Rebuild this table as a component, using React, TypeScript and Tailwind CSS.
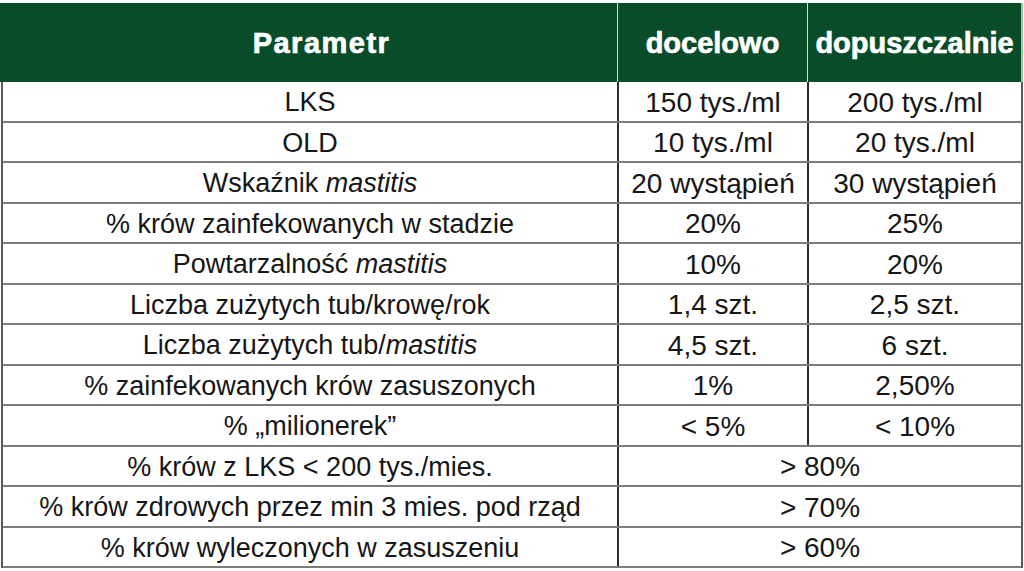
import React from "react";

type Row = { p: React.ReactNode; a: string; b?: string };

const rows: Row[] = [
  { p: "LKS", a: "150 tys./ml", b: "200 tys./ml" },
  { p: "OLD", a: "10 tys./ml", b: "20 tys./ml" },
  { p: <>Wskaźnik <i>mastitis</i></>, a: "20 wystąpień", b: "30 wystąpień" },
  { p: "% krów zainfekowanych w stadzie", a: "20%", b: "25%" },
  { p: <>Powtarzalność <i>mastitis</i></>, a: "10%", b: "20%" },
  { p: "Liczba zużytych tub/krowę/rok", a: "1,4 szt.", b: "2,5 szt." },
  { p: <>Liczba zużytych tub/<i>mastitis</i></>, a: "4,5 szt.", b: "6 szt." },
  { p: "% zainfekowanych krów zasuszonych", a: "1%", b: "2,50%" },
  { p: "% „milionerek”", a: "< 5%", b: "< 10%" },
  { p: "% krów z LKS < 200 tys./mies.", a: "> 80%" },
  { p: "% krów zdrowych przez min 3 mies. pod rząd", a: "> 70%" },
  { p: "% krów wyleczonych w zasuszeniu", a: "> 60%" },
];

export default function App() {
  return (
    <div
      className="w-[1024px] h-[571px] bg-white pt-[3px] overflow-hidden"
      style={{ fontFamily: '"Liberation Sans", Arial, sans-serif' }}
    >
      <div className="w-[1023px]">
        <div className="grid grid-cols-[617px_190px_1fr] h-[79px] bg-[#084c2a] text-white font-bold text-[29px] [-webkit-text-stroke:0.7px_white]">
          <div className="flex items-center justify-center pt-[3px] pl-[26px] tracking-[1.5px]">Parametr</div>
          <div className="flex items-center justify-center pt-[3px] border-l border-[#cfe3d2]">docelowo</div>
          <div className="flex items-center justify-center pt-[3px] border-l border-[#cfe3d2] border-r-2 border-r-[#9cc7a6]">dopuszczalnie</div>
        </div>
        <div className="ml-[1px] w-[1022px] border-x-2 border-[#5a5a5a] text-[#161616]">
          {rows.map((r, i) => (
            <div
              key={i}
              className="grid grid-cols-[614px_190px_1fr] h-[40.5px] border-b-2 border-[#7d7d7d]"
            >
              <div className="flex items-center justify-center leading-none text-[27px] pt-[3px]">
                <span>{r.p}</span>
              </div>
              {r.b !== undefined ? (
                <>
                  <div className="flex items-center justify-center leading-none text-[28px] pt-[3px] border-l-2 border-[#2e2e2e]">{r.a}</div>
                  <div className="flex items-center justify-center leading-none text-[28px] pt-[3px] border-l-2 border-[#2e2e2e]">{r.b}</div>
                </>
              ) : (
                <div className="col-span-2 flex items-center justify-center leading-none text-[28px] pt-[3px] border-l-2 border-[#2e2e2e]">{r.a}</div>
              )}
            </div>
          ))}
        </div>
      </div>
    </div>
  );
}
